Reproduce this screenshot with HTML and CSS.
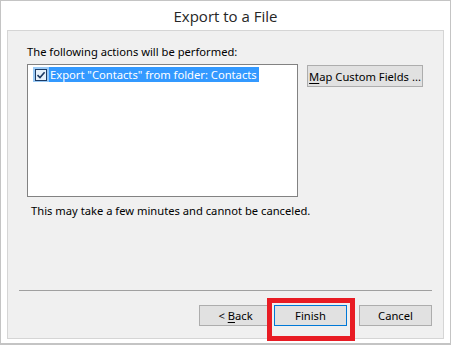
FILE: index.html
```html
<!DOCTYPE html>
<html>
<head>
<meta charset="utf-8">
<link rel="stylesheet" href="styles.css">
</head>
<body>
<div class="window">
  <div class="header">Export to a File</div>
  <div class="panel">
    <div class="label">The following actions will be performed:</div>
    <div class="row">
      <div class="listbox">
        <div class="item">
          <span class="chk-area">
            <svg class="chk" width="12" height="12" viewBox="0 0 12 12">
              <rect x="0.5" y="0.5" width="11" height="11" fill="#e6f1fb" stroke="#1c3a63"/>
              <path d="M2.5 6.2 L5 8.6 L9.6 3.2" fill="none" stroke="#1c3a63" stroke-width="1.6"/>
            </svg>
          </span>
          <span class="item-text">Export "Contacts" from folder: Contacts</span>
        </div>
      </div>
      <button class="btn btn-map"><u>M</u>ap Custom Fields ...</button>
    </div>
    <div class="note">This may take a few minutes and cannot be canceled.</div>
    <div class="spacer"></div>
    <div class="sep"></div>
    <div class="buttons">
      <button class="btn">&lt; <u>B</u>ack</button>
      <span class="finish-wrap">
        <button class="btn btn-default">Finish</button>
        <span class="highlight"></span>
      </span>
      <button class="btn btn-cancel">Cancel</button>
    </div>
  </div>
</div>
</body>
</html>
```

FILE: styles.css
```css
* { box-sizing: border-box; }
html, body { margin: 0; padding: 0; background: #ffffff; }
body {
  font-family: "Noto Sans", "Open Sans", "DejaVu Sans", sans-serif;
  font-size: 11.2px;
  color: #000;
}
.window {
  width: 451px;
  height: 345px;
  border: 1px solid #c4c4c4;
  border-bottom-width: 2px;
  padding: 0 6px 4px 6px;
  display: flex;
  flex-direction: column;
  background: #fff;
}
.header {
  height: 29px;
  display: flex;
  align-items: center;
  justify-content: center;
  font-family: "Open Sans", "Noto Sans", sans-serif;
  font-weight: 400;
  font-size: 15px;
  color: #262626;
  padding-top: 1px;
}
.panel {
  flex: 1;
  background: #f0f0f0;
  border: 1px solid #d5d5d5;
  display: flex;
  flex-direction: column;
  padding: 13px 11px 12px 19px;
}
.label {
  line-height: 16px;
  height: 16px;
}
.row {
  display: flex;
  align-items: flex-start;
  margin-top: 4px;
}
.listbox {
  width: 271px;
  height: 133px;
  background: #fff;
  border: 1px solid #828282;
  padding: 2px 0 0 5px;
}
.item {
  display: flex;
  height: 15px;
  align-items: stretch;
}
.chk-area {
  width: 16px;
  background: #99c9f5;
  display: flex;
  align-items: center;
  justify-content: center;
}
.chk { display: block; }
.item-text {
  background: #3399ff;
  color: #fff;
  line-height: 15px;
  padding: 0 2px 0 1px;
  white-space: nowrap;
}
.btn {
  font: inherit;
  color: #000;
  background: #e1e1e1;
  border: 1px solid #adadad;
  height: 21px;
  width: 73px;
  padding: 0;
  line-height: 19px;
  margin: 0;
  white-space: nowrap;
}
.btn u { text-decoration: underline; text-underline-offset: 2px; }
.btn-map {
  width: 116px;
  height: 22px;
  margin-left: 9px;
  margin-top: 1px;
}
.note {
  margin-top: 6px;
  padding-left: 4px;
  line-height: 15px;
}
.spacer { flex: 1; }
.sep {
  height: 1px;
  background: #a0a0a0;
  margin-left: -8px;
  margin-right: 0;
}
.buttons {
  display: flex;
  justify-content: flex-end;
  margin-top: 14px;
}
.finish-wrap {
  position: relative;
  margin-left: 2px;
  display: flex;
}
.btn-default {
  border-color: #0078d7;
}
.btn-cancel { margin-left: 12px; }
.highlight {
  position: absolute;
  left: -7px;
  top: -7px;
  width: 88px;
  height: 43px;
  border: 5px solid #e81c24;
  pointer-events: none;
}
```
